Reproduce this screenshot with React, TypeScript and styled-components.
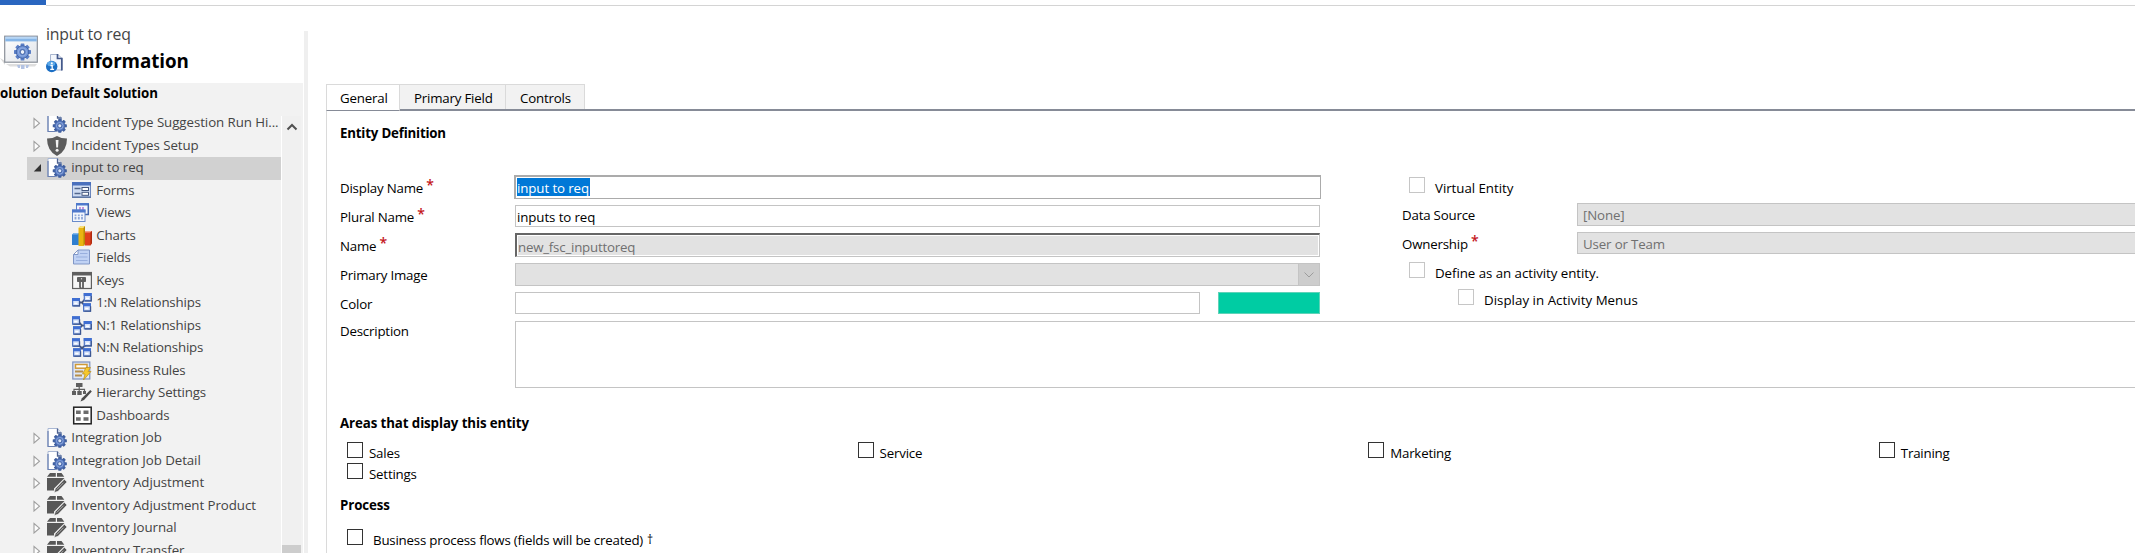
import React from 'react';
import styled, { createGlobalStyle } from 'styled-components';

const GlobalStyle = createGlobalStyle`
  * { box-sizing: border-box; }
  body {
    margin: 0;
    background: #fff;
    color: #000;
    overflow: hidden;
    font: 13.3px/20px "Open Sans", "Noto Sans", sans-serif;
  }
`;

/* ---------- shell ---------- */

const Page = styled.div`
  width: 2135px;
  height: 553px;
  overflow: hidden;
  display: flex;
  flex-direction: column;
`;

const TopBar = styled.div`
  display: flex;
  flex: none;
  height: 6px;
`;

const TopAccent = styled.div`
  width: 46px;
  height: 5px;
  background: #2a66c0;
`;

const TopRule = styled.div`
  flex: 1;
  margin-top: 5px;
  height: 1px;
  background: #d4d4d4;
`;

const Body = styled.div`
  flex: 1;
  display: flex;
  min-height: 0;
`;

const Side = styled.aside`
  width: 303px;
  display: flex;
  flex-direction: column;
`;

const Splitter = styled.div`
  width: 4px;
  margin: 25px 0 0 1px;
  background: #efefef;
`;

/* ---------- side header ---------- */

const SideHeader = styled.header`
  height: 77px;
  flex: none;
  display: flex;
  padding-top: 15px;
`;

const EntityIcon = styled.div`
  width: 46px;
  padding-top: 14px;
  line-height: 0;
`;

const HeaderText = styled.div`
  display: flex;
  flex-direction: column;
`;

const EntityName = styled.div`
  font-size: 15.8px;
  line-height: 26px;
  letter-spacing: -0.2px;
  color: #444;
`;

const HeaderTitle = styled.div`
  display: flex;
  height: 30px;
`;

const InfoIconSlot = styled.div`
  width: 30px;
  padding-top: 6px;
  line-height: 0;
`;

const Title = styled.div`
  font-size: 18.8px;
  font-weight: 700;
  line-height: 29px;
  letter-spacing: -0.08px;
`;

const SolutionPane = styled.div`
  flex: 1;
  min-height: 0;
  background: #f2f2f2;
  display: flex;
  flex-direction: column;
`;

const SolutionName = styled.div`
  height: 33px;
  flex: none;
  font-weight: 700;
  letter-spacing: -0.06px;
`;

/* ---------- tree ---------- */

const TreeArea = styled.div`
  flex: 1;
  min-height: 0;
  display: flex;
`;

const Tree = styled.div`
  width: 281px;
  overflow: hidden;
  padding-left: 27px;
`;

const TreeList = styled.div`
  margin-top: -4px;
`;

const TreeRow = styled.div<{ $child?: boolean; $selected?: boolean }>`
  display: flex;
  height: 22.5px;
  padding-left: ${(p) => (p.$child ? 45 : 6)}px;
  background: ${(p) => (p.$selected ? '#d1d1d1' : 'transparent')};
  color: #444;
  letter-spacing: ${(p) => (p.$child ? -0.18 : -0.07)}px;
  white-space: nowrap;
`;

const ExpanderSlot = styled.span`
  width: 14px;
  padding-top: 5px;
  line-height: 0;
`;

const IconSlot = styled.span`
  width: 24.3px;
  line-height: 0;
  padding-top: 1px;
`;

const ScrollTrack = styled.div`
  width: 20px;
  border-left: 1px solid #fff;
  background: #f0f0f0;
  display: flex;
  flex-direction: column;
  justify-content: space-between;
`;

const ScrollArrow = styled.div`
  padding: 7px 0 0 4px;
  line-height: 0;
`;

const ScrollThumb = styled.div`
  height: 8px;
  background: #cdcdcd;
`;

/* ---------- main ---------- */

const Main = styled.main`
  flex: 1;
  margin: 78px 0 0 18px;
  display: flex;
  flex-direction: column;
  min-width: 0;
`;

const Tabs = styled.div`
  display: flex;
  height: 27px;
  flex: none;
`;

const Tab = styled.div<{ $width: number; $active?: boolean }>`
  width: ${(p) => p.$width}px;
  height: ${(p) => (p.$active ? 27 : 25)}px;
  border: 1px solid #dadada;
  border-left-width: ${(p) => (p.$active ? 1 : 0)}px;
  border-bottom: ${(p) => (p.$active ? '1px solid #868b97' : '0')};
  background: ${(p) => (p.$active ? '#fff' : '#f2f2f2')};
  padding: 3px 0 0 ${(p) => (p.$active ? 13 : 14)}px;
  letter-spacing: -0.2px;
`;

const TabGroup = styled.div`
  flex: 1;
  display: flex;
  height: 27px;
  border-bottom: 2px solid #868b97;
`;

const Panel = styled.section`
  flex: 1;
  border-left: 1px solid #dadada;
  padding: 12px 0 0 13px;
  display: flex;
  flex-direction: column;
`;

const SectionTitle = styled.h2<{ $height: number; $spacing?: number }>`
  margin: 0;
  flex: none;
  height: ${(p) => p.$height}px;
  font-size: 13.3px;
  line-height: 20px;
  font-weight: 700;
  letter-spacing: ${(p) => p.$spacing ?? -0.1}px;
`;

const Columns = styled.div`
  display: flex;
  height: 146px;
  flex: none;
`;

const LeftColumn = styled.div`
  width: 1062px;
`;

const RightColumn = styled.div`
  flex: 1;
`;

const FieldRow = styled.div<{ $height?: number }>`
  display: flex;
  height: ${(p) => p.$height ?? 29}px;
`;

const Label = styled.label<{ $top?: number; $width?: number }>`
  width: ${(p) => p.$width ?? 175}px;
  padding-top: ${(p) => p.$top ?? 3}px;
  flex: none;
  letter-spacing: -0.2px;
  white-space: nowrap;
`;

const Star = styled.span`
  display: inline-block;
  margin-left: 3px;
  color: #c4161c;
  font-size: 14px;
  font-weight: 600;
  line-height: 10px;
  vertical-align: 3px;
`;

const TextBox = styled.div<{ $width: number; $height?: number; $top?: number }>`
  width: ${(p) => p.$width}px;
  height: ${(p) => p.$height ?? 22}px;
  margin-top: ${(p) => p.$top ?? 1}px;
  padding: 1px 0 0 1px;
  border: 1px solid #c4c4c4;
  letter-spacing: -0.1px;
`;

const FocusedBox = styled(TextBox)`
  margin-left: -1px;
  border: 2px solid #ababab;
  border-right-width: 1px;
  border-bottom-width: 1px;
  padding: 1px 0 0 1px;
`;

const Selection = styled.span`
  display: block;
  width: 73px;
  height: 18px;
  line-height: 20px;
  background: #0078d7;
  color: #fff;
`;

const ReadOnlyBox = styled(TextBox)`
  border: 1px solid #c4c4c4;
  border-top: 2px solid #666;
  border-left: 2px solid #666;
  padding: 1px;
`;

const ReadOnlyFill = styled.div`
  height: 19px;
  line-height: 22px;
  background: #e2e2e2;
  color: #707070;
  letter-spacing: -0.22px;
`;

const DisabledSelect = styled.div<{ $height: number; $top?: number; $width?: string }>`
  width: ${(p) => p.$width ?? 'auto'};
  flex: ${(p) => (p.$width ? 'none' : 1)};
  height: ${(p) => p.$height}px;
  margin-top: ${(p) => p.$top ?? 0}px;
  border: 1px solid #c4c4c4;
  border-right-width: ${(p) => (p.$width ? 1 : 0)}px;
  background: #e2e2e2;
  color: #707070;
  padding: 1px 0 0 5px;
  display: flex;
  justify-content: space-between;
  letter-spacing: -0.15px;
`;

const SelectButton = styled.span`
  width: 21px;
  height: 21px;
  margin-top: -1px;
  background: #cdcdcd;
  border-left: 1px solid #c4c4c4;
  display: flex;
  align-items: center;
  justify-content: center;
`;

const Swatch = styled.div`
  width: 102px;
  height: 22px;
  margin: 1px 0 0 18px;
  background: #00cca3;
  border: 1px solid #5fd3b8;
`;

const DescriptionBox = styled.div`
  flex: 1;
  height: 67px;
  border: 1px solid #c4c4c4;
  border-right: 0;
`;

const CheckRow = styled.div<{ $indent: number; $gap: number; $height: number; $spacing?: number; $width?: number }>`
  display: flex;
  width: ${(p) => (p.$width ? `${p.$width}px` : 'auto')};
  height: ${(p) => p.$height}px;
  padding-left: ${(p) => p.$indent}px;
  gap: ${(p) => p.$gap}px;
  letter-spacing: ${(p) => p.$spacing ?? -0.15}px;
  white-space: nowrap;
`;

const CheckBox = styled.span<{ $disabled?: boolean; $top?: number }>`
  width: 16px;
  height: 16px;
  flex: none;
  margin-top: ${(p) => p.$top ?? 0}px;
  border: 1px solid ${(p) => (p.$disabled ? '#c6c6c6' : '#333')};
  background: #fff;
`;

const CheckText = styled.span<{ $drop?: number }>`
  padding-top: ${(p) => p.$drop ?? 1}px;
`;

const AreaGrid = styled.div`
  display: flex;
  flex-wrap: wrap;
  width: 2044px;
  height: 53px;
  align-content: flex-start;
`;

const Dagger = styled.span`
  font-size: 12px;
  line-height: 10px;
  vertical-align: 1px;
  margin-left: 4px;
`;

/* ---------- icons ---------- */

const teeth = [0, 45, 90, 135, 180, 225, 270, 315];

const Gear = ({ x, y, s, light }: { x: number; y: number; s: number; light?: boolean }) => (
  <g transform={`translate(${x} ${y}) scale(${s})`}>
    {teeth.map((a) => (
      <rect key={a} x="-1.6" y="-7.2" width="3.2" height="4" rx=".5" fill={light ? '#5b7fc6' : '#41609f'} transform={`rotate(${a})`} />
    ))}
    <circle r="5.3" fill={light ? '#6f93d6' : '#5577bd'} stroke="#3d5da0" strokeWidth=".7" />
    <circle r="3.4" fill="none" stroke="#8fabe0" strokeWidth=".9" />
    <circle r="2" fill={light ? '#eef3fb' : '#dfe8f7'} stroke="#3d5da0" strokeWidth=".8" />
  </g>
);

const WindowGearIcon = () => (
  <svg width="40" height="40" viewBox="0 0 40 40">
    <defs>
      <linearGradient id="win" x1="0" y1="0" x2="1" y2="1">
        <stop offset="0" stopColor="#fff" />
        <stop offset="1" stopColor="#dfe3e8" />
      </linearGradient>
    </defs>
    <path d="M0 23l5 3v4z" fill="#d9d9d9" />
    <rect x="4.7" y="1.2" width="32.6" height="26" fill="url(#win)" stroke="#8a9099" strokeWidth="1.2" />
    <rect x="5.3" y="1.8" width="31.4" height="4.6" fill="#86b6e8" />
    <rect x="5.3" y="1.8" width="31.4" height="2" fill="#b9d6f4" />
    <path d="M6 29h31l-2 2.500H10z" fill="#dedede" />
    <Gear x={22.5} y={17} s={1.18} light />
    <path d="M17 30h3v3h-2zM21 30h3.500v4H21zM26 30h3l-1 3h-2z" fill="#b3c3e3" />
  </svg>
);

const InfoDocIcon = () => (
  <svg width="19" height="20" viewBox="0 0 19 20">
    <path d="M4.500 1.500H12l4 4V17H4.500z" fill="#f4f7fc" stroke="#a9b6cf" />
    <path d="M11.500 1v4.500h4.300V17.500" fill="none" stroke="#44598a" strokeWidth="1.700" />
    <circle cx="5.700" cy="13.500" r="5.700" fill="#1c6fc4" />
    <ellipse cx="5.200" cy="10.800" rx="4" ry="2.500" fill="#5aa7e8" />
    <path d="M4.500 12.500h1.700v3.700M4.200 16.400h3.900" stroke="#fff" strokeWidth="1.300" fill="none" />
    <circle cx="5.800" cy="10.300" r="1" fill="#fff" />
  </svg>
);

const EntityDocIcon = () => (
  <svg width="20" height="20" viewBox="0 0 20 20">
    <path d="M1 .5h9.500l4 4.500v13.500H1z" fill="#fff" stroke="#a9b7d3" />
    <path d="M1 3v15.500h7" fill="none" stroke="#6a80b2" strokeWidth="1.200" />
    <path d="M10.500 .5v4.500h4" fill="#dce5f4" stroke="#4d618f" strokeWidth="1.300" />
    <Gear x={12.8} y={12.8} s={0.98} />
  </svg>
);

const ShieldIcon = () => (
  <svg width="20" height="20" viewBox="0 0 20 20">
    <path d="M0 2.500Q6 2.500 10 0q4 2.500 10 2.500Q20 15 10 20 0 15 0 2.500z" fill="#5c5c5c" />
    <path d="M8.700 4h2.800l-.5 7.500H9.200z" fill="#f2f2f2" />
    <circle cx="10.100" cy="14.200" r="1.500" fill="#f2f2f2" />
  </svg>
);

const BoxPenIcon = () => (
  <svg width="20" height="20" viewBox="0 0 20 20">
    <path d="M3 0h5.800v3.700H0zM10 0h4.500l2.800 3.700H10z" fill="#575757" />
    <path d="M0 5h17.500L7 15.500V17.500H0z" fill="#575757" />
    <path d="M17.300 6.300L20 9l-9 9.300-3.800 1.200 1.100-3.800z" fill="#575757" stroke="#f2f2f2" strokeWidth=".6" />
    <path d="M16.500 9.700l-6.700 6.800" stroke="#b5b5b5" strokeWidth=".9" />
  </svg>
);

const FormsIcon = () => (
  <svg width="20" height="20" viewBox="0 0 20 20">
    <rect x=".5" y="1.500" width="18" height="14.500" fill="#cfdcf2" stroke="#6a86bd" />
    <rect x="0" y="1" width="19" height="3.500" fill="#4a70bd" />
    <path d="M2.500 7.500h6M2.500 12.500h6" stroke="#54688f" strokeWidth="1.700" />
    <rect x="10" y="6.500" width="6.500" height="3" fill="#fff" stroke="#43567f" />
    <rect x="10" y="11.300" width="6.500" height="3" fill="#fff" stroke="#43567f" />
    <path d="M0 16.300h19" stroke="#56709f" strokeWidth="1.200" />
  </svg>
);

const ViewsIcon = () => (
  <svg width="20" height="20" viewBox="0 0 20 20">
    <rect x="4.500" y=".5" width="12" height="11" fill="#f3f6fc" stroke="#5d83cc" />
    <rect x="4" y="0" width="13" height="2.500" fill="#4f79cc" />
    <path d="M8 4v3M11 4v3" stroke="#b06bd0" strokeWidth="1.400" />
    <path d="M16.300 1v10.500H13" fill="none" stroke="#4467ae" strokeWidth="1.500" />
    <rect x=".5" y="7" width="12.500" height="11.500" fill="#f3f6fc" stroke="#6a8ccb" />
    <rect x="0" y="6.500" width="13.500" height="3" fill="#4f79cc" />
    <path d="M3.500 11.500v5M6.800 11.500v5M10 11.500v5" stroke="#8ea7d8" strokeWidth="1.800" />
    <path d="M2 13.500h10" stroke="#f3f6fc" strokeWidth=".8" />
  </svg>
);

const ChartsIcon = () => (
  <svg width="20" height="20" viewBox="0 0 20 20">
    <path d="M0 8.500l2-1.500h5v12H0z" fill="#2f7fd0" />
    <path d="M0 8.500l2-1.500h5l-1.500 1.500z" fill="#7fb8ee" />
    <path d="M12.500 6.500L14 5h6v12l-1.500 2.500h-6z" fill="#e0401c" />
    <path d="M12.500 6.500L14 5h6l-1.500 1.500z" fill="#f6a08a" />
    <path d="M18.500 6.500L20 5v12l-1.500 2.500z" fill="#b02a10" />
    <path d="M6.500 2l2-2H13v17.500L11.500 20h-5z" fill="#e9b511" />
    <path d="M6.500 2l2-2H13l-1.500 2z" fill="#f8de78" />
    <path d="M11.500 2L13 0v17.500L11.500 20z" fill="#b88906" />
  </svg>
);

const FieldsIcon = () => (
  <svg width="20" height="20" viewBox="0 0 20 20">
    <path d="M6 2h11.500v14h-16V6.500z" fill="#c0d2f4" stroke="#8197c6" />
    <path d="M6 2v4.500H1.500z" fill="#fff" stroke="#8197c6" />
    <path d="M8 5.500h7.500M4 9h11.500M4 12.500h11.500" stroke="#98afde" />
  </svg>
);

const KeysIcon = () => (
  <svg width="20" height="20" viewBox="0 0 20 20">
    <rect x=".6" y="1.500" width="18.800" height="16" fill="#f6f6f6" stroke="#5f5f5f" strokeWidth="1.200" />
    <rect x="0" y="1" width="20" height="3.500" fill="#5f5f5f" />
    <rect x="5" y="6" width="9" height="5" rx=".8" fill="#5f5f5f" />
    <path d="M8 10v6l1 1.500M11 10v7.500" stroke="#5f5f5f" strokeWidth="1.800" fill="none" />
    <circle cx="9.500" cy="7.700" r=".7" fill="#ddd" />
  </svg>
);

const Node = ({ x, y }: { x: number; y: number }) => (
  <g transform={`translate(${x} ${y})`}>
    <rect x=".6" y=".6" width="6.800" height="7.300" fill="#d4e1fa" stroke="#4f75c4" strokeWidth="1.200" />
    <rect x="0" y="0" width="8" height="3" fill="#3f6ed2" />
    <path d="M1.200 7.900h6.400V3" fill="none" stroke="#3c568f" strokeWidth="1.200" />
    <path d="M2.300 5.300h3" stroke="#fff" strokeWidth="1.400" />
  </g>
);

const RelationIcon = ({ left, right }: { left: 1 | 2; right: 1 | 2 }) => (
  <svg width="20" height="20" viewBox="0 0 20 20">
    {left === 2 && right === 2 && <path d="M6 7l8 6M14 7l-8 6" stroke="#43557f" strokeWidth="1.800" />}
    {left === 1 && <path d="M14 5l-4 4.500H7M10 9.500l4 5" fill="none" stroke="#43557f" strokeWidth="1.800" />}
    {right === 1 && <path d="M6 5l4 4.500h3M10 9.500l-4 5" fill="none" stroke="#43557f" strokeWidth="1.800" />}
    {left === 1 ? <Node x={0} y={5} /> : <><Node x={0} y={0.3} /><Node x={1} y={10.3} /></>}
    {right === 1 ? <Node x={11.7} y={5} /> : <><Node x={11.7} y={0} /><Node x={11} y={10.3} /></>}
  </svg>
);

const RulesIcon = () => (
  <svg width="20" height="20" viewBox="0 0 20 20">
    <rect x=".8" y="1" width="17" height="17" fill="#dfe7f5" stroke="#7d92bf" strokeWidth="1.200" />
    <rect x="3.500" y="3.500" width="11.500" height="3.700" fill="#fff" stroke="#cf9a38" strokeWidth="1.500" />
    <path d="M3 10.500h8M3 14.500h7" stroke="#b58f4c" strokeWidth="2" />
    <path d="M14 6.500h4.500l-2.500 4h3L11.500 19l1.500-6h-2.500z" fill="#f6c82c" stroke="#b98e1d" strokeWidth=".7" />
  </svg>
);

const HierarchyIcon = () => (
  <svg width="20" height="20" viewBox="0 0 20 20">
    <path d="M4 0h6.500v4H4zM0 8h4v4H0zM5.300 8h4.400v4H5.300zM11 8h3v3h-3z" fill="#5f5f5f" />
    <path d="M7.200 3.500V9M2 8.500V6.300h10.500V8.500" fill="none" stroke="#5f5f5f" strokeWidth="1.200" />
    <path d="M18.300 7l1.500 1.500-7.800 8.500-3.500 1.500 1.400-3.200z" fill="#4a4a4a" />
  </svg>
);

const DashboardsIcon = () => (
  <svg width="20" height="20" viewBox="0 0 20 20">
    <rect x="1.700" y="1.200" width="17.500" height="16.600" fill="#fff" stroke="#222" strokeWidth="1.500" />
    <path d="M4 4.500h4.700v3.500H4zM11.500 4.500h5v3.500h-5zM4 11.300h4.700V14.800H4zM11.500 11.300h5V14.800h-5z" fill="#6b6b6b" />
  </svg>
);

const Expander = ({ open }: { open?: boolean }) => (
  <svg width="9" height="12" viewBox="0 0 9 12">
    {open ? (
      <path d="M8 2v7.500H.8z" fill="#333" />
    ) : (
      <path d="M1 1.500L6.500 6.200 1 11z" fill="#fdfdfd" stroke="#a0a0a0" strokeWidth="1.100" />
    )}
  </svg>
);

/* ---------- data ---------- */

type Item = { text: string; icon: React.ReactNode; child?: boolean; open?: boolean };

const items: Item[] = [
  { text: 'Incident Type Suggestion Run Hi...', icon: <EntityDocIcon /> },
  { text: 'Incident Types Setup', icon: <ShieldIcon /> },
  { text: 'input to req', icon: <EntityDocIcon />, open: true },
  { text: 'Forms', icon: <FormsIcon />, child: true },
  { text: 'Views', icon: <ViewsIcon />, child: true },
  { text: 'Charts', icon: <ChartsIcon />, child: true },
  { text: 'Fields', icon: <FieldsIcon />, child: true },
  { text: 'Keys', icon: <KeysIcon />, child: true },
  { text: '1:N Relationships', icon: <RelationIcon left={1} right={2} />, child: true },
  { text: 'N:1 Relationships', icon: <RelationIcon left={2} right={1} />, child: true },
  { text: 'N:N Relationships', icon: <RelationIcon left={2} right={2} />, child: true },
  { text: 'Business Rules', icon: <RulesIcon />, child: true },
  { text: 'Hierarchy Settings', icon: <HierarchyIcon />, child: true },
  { text: 'Dashboards', icon: <DashboardsIcon />, child: true },
  { text: 'Integration Job', icon: <EntityDocIcon /> },
  { text: 'Integration Job Detail', icon: <EntityDocIcon /> },
  { text: 'Inventory Adjustment', icon: <BoxPenIcon /> },
  { text: 'Inventory Adjustment Product', icon: <BoxPenIcon /> },
  { text: 'Inventory Journal', icon: <BoxPenIcon /> },
  { text: 'Inventory Transfer', icon: <BoxPenIcon /> },
];

const areas = ['Sales', 'Service', 'Marketing', 'Training', 'Settings'];

export default function App() {
  return (
    <Page>
      <GlobalStyle />
      <TopBar>
        <TopAccent />
        <TopRule />
      </TopBar>
      <Body>
        <Side>
          <SideHeader>
            <EntityIcon><WindowGearIcon /></EntityIcon>
            <HeaderText>
              <EntityName>input to req</EntityName>
              <HeaderTitle>
                <InfoIconSlot><InfoDocIcon /></InfoIconSlot>
                <Title>Information</Title>
              </HeaderTitle>
            </HeaderText>
          </SideHeader>
          <SolutionPane>
            <SolutionName>olution Default Solution</SolutionName>
            <TreeArea>
              <Tree>
                <TreeList>
                  {items.map((it) => (
                    <TreeRow key={it.text} $child={it.child} $selected={it.open}>
                      {!it.child && <ExpanderSlot><Expander open={it.open} /></ExpanderSlot>}
                      <IconSlot>{it.icon}</IconSlot>
                      <span>{it.text}</span>
                    </TreeRow>
                  ))}
                </TreeList>
              </Tree>
              <ScrollTrack>
                <ScrollArrow>
                  <svg width="12" height="8" viewBox="0 0 12 8"><path d="M1.500 6.500L6 2l4.500 4.500" fill="none" stroke="#505050" strokeWidth="2" /></svg>
                </ScrollArrow>
                <ScrollThumb />
              </ScrollTrack>
            </TreeArea>
          </SolutionPane>
        </Side>
        <Splitter />
        <Main>
          <Tabs>
            <Tab $width={74} $active>General</Tab>
            <TabGroup>
              <Tab $width={106}>Primary Field</Tab>
              <Tab $width={79}>Controls</Tab>
            </TabGroup>
          </Tabs>
          <Panel>
            <SectionTitle $height={52} $spacing={-0.2}>Entity Definition</SectionTitle>
            <Columns>
              <LeftColumn>
                <FieldRow>
                  <Label>Display Name<Star>*</Star></Label>
                  <FocusedBox $width={807} $height={24} $top={0}><Selection>input to req</Selection></FocusedBox>
                </FieldRow>
                <FieldRow>
                  <Label>Plural Name<Star>*</Star></Label>
                  <TextBox $width={805}>inputs to req</TextBox>
                </FieldRow>
                <FieldRow>
                  <Label>Name<Star>*</Star></Label>
                  <ReadOnlyBox $width={805} $height={24} $top={0}><ReadOnlyFill>new_fsc_inputtoreq</ReadOnlyFill></ReadOnlyBox>
                </FieldRow>
                <FieldRow>
                  <Label>Primary Image</Label>
                  <DisabledSelect $width="805px" $height={23} $top={1}>
                    <span />
                    <SelectButton>
                      <svg width="10" height="6" viewBox="0 0 10 6"><path d="M.5.500L5 5 9.500.500" fill="none" stroke="#9c9c9c" /></svg>
                    </SelectButton>
                  </DisabledSelect>
                </FieldRow>
                <FieldRow>
                  <Label>Color</Label>
                  <TextBox $width={685} />
                  <Swatch />
                </FieldRow>
              </LeftColumn>
              <RightColumn>
                <CheckRow $indent={7} $gap={10} $height={28} $spacing={-0.04}>
                  <CheckBox $disabled $top={2} />
                  <CheckText $drop={3}>Virtual Entity</CheckText>
                </CheckRow>
                <FieldRow>
                  <Label $top={2}>Data Source</Label>
                  <DisabledSelect $height={23}>[None]</DisabledSelect>
                </FieldRow>
                <FieldRow>
                  <Label $top={2}>Ownership<Star>*</Star></Label>
                  <DisabledSelect $height={22}>User or Team</DisabledSelect>
                </FieldRow>
                <CheckRow $indent={7} $gap={10} $height={27} $spacing={-0.05}>
                  <CheckBox $disabled $top={1} />
                  <CheckText $drop={2}>Define as an activity entity.</CheckText>
                </CheckRow>
                <CheckRow $indent={56} $gap={10} $height={27} $spacing={0.03}>
                  <CheckBox $disabled $top={1} />
                  <CheckText $drop={2}>Display in Activity Menus</CheckText>
                </CheckRow>
              </RightColumn>
            </Columns>
            <FieldRow $height={92}>
              <Label $top={0}>Description</Label>
              <DescriptionBox />
            </FieldRow>
            <SectionTitle $height={29} $spacing={-0.1}>Areas that display this entity</SectionTitle>
            <AreaGrid>
              {areas.map((a) => (
                <CheckRow key={a} $indent={7} $gap={6} $height={21} $width={510.6} $spacing={-0.2}>
                  <CheckBox />
                  <CheckText>{a}</CheckText>
                </CheckRow>
              ))}
            </AreaGrid>
            <SectionTitle $height={34}>Process</SectionTitle>
            <CheckRow $indent={7} $gap={10} $height={24} $spacing={-0.21}>
              <CheckBox />
              <CheckText>Business process flows (fields will be created)<Dagger>†</Dagger></CheckText>
            </CheckRow>
          </Panel>
        </Main>
      </Body>
    </Page>
  );
}
